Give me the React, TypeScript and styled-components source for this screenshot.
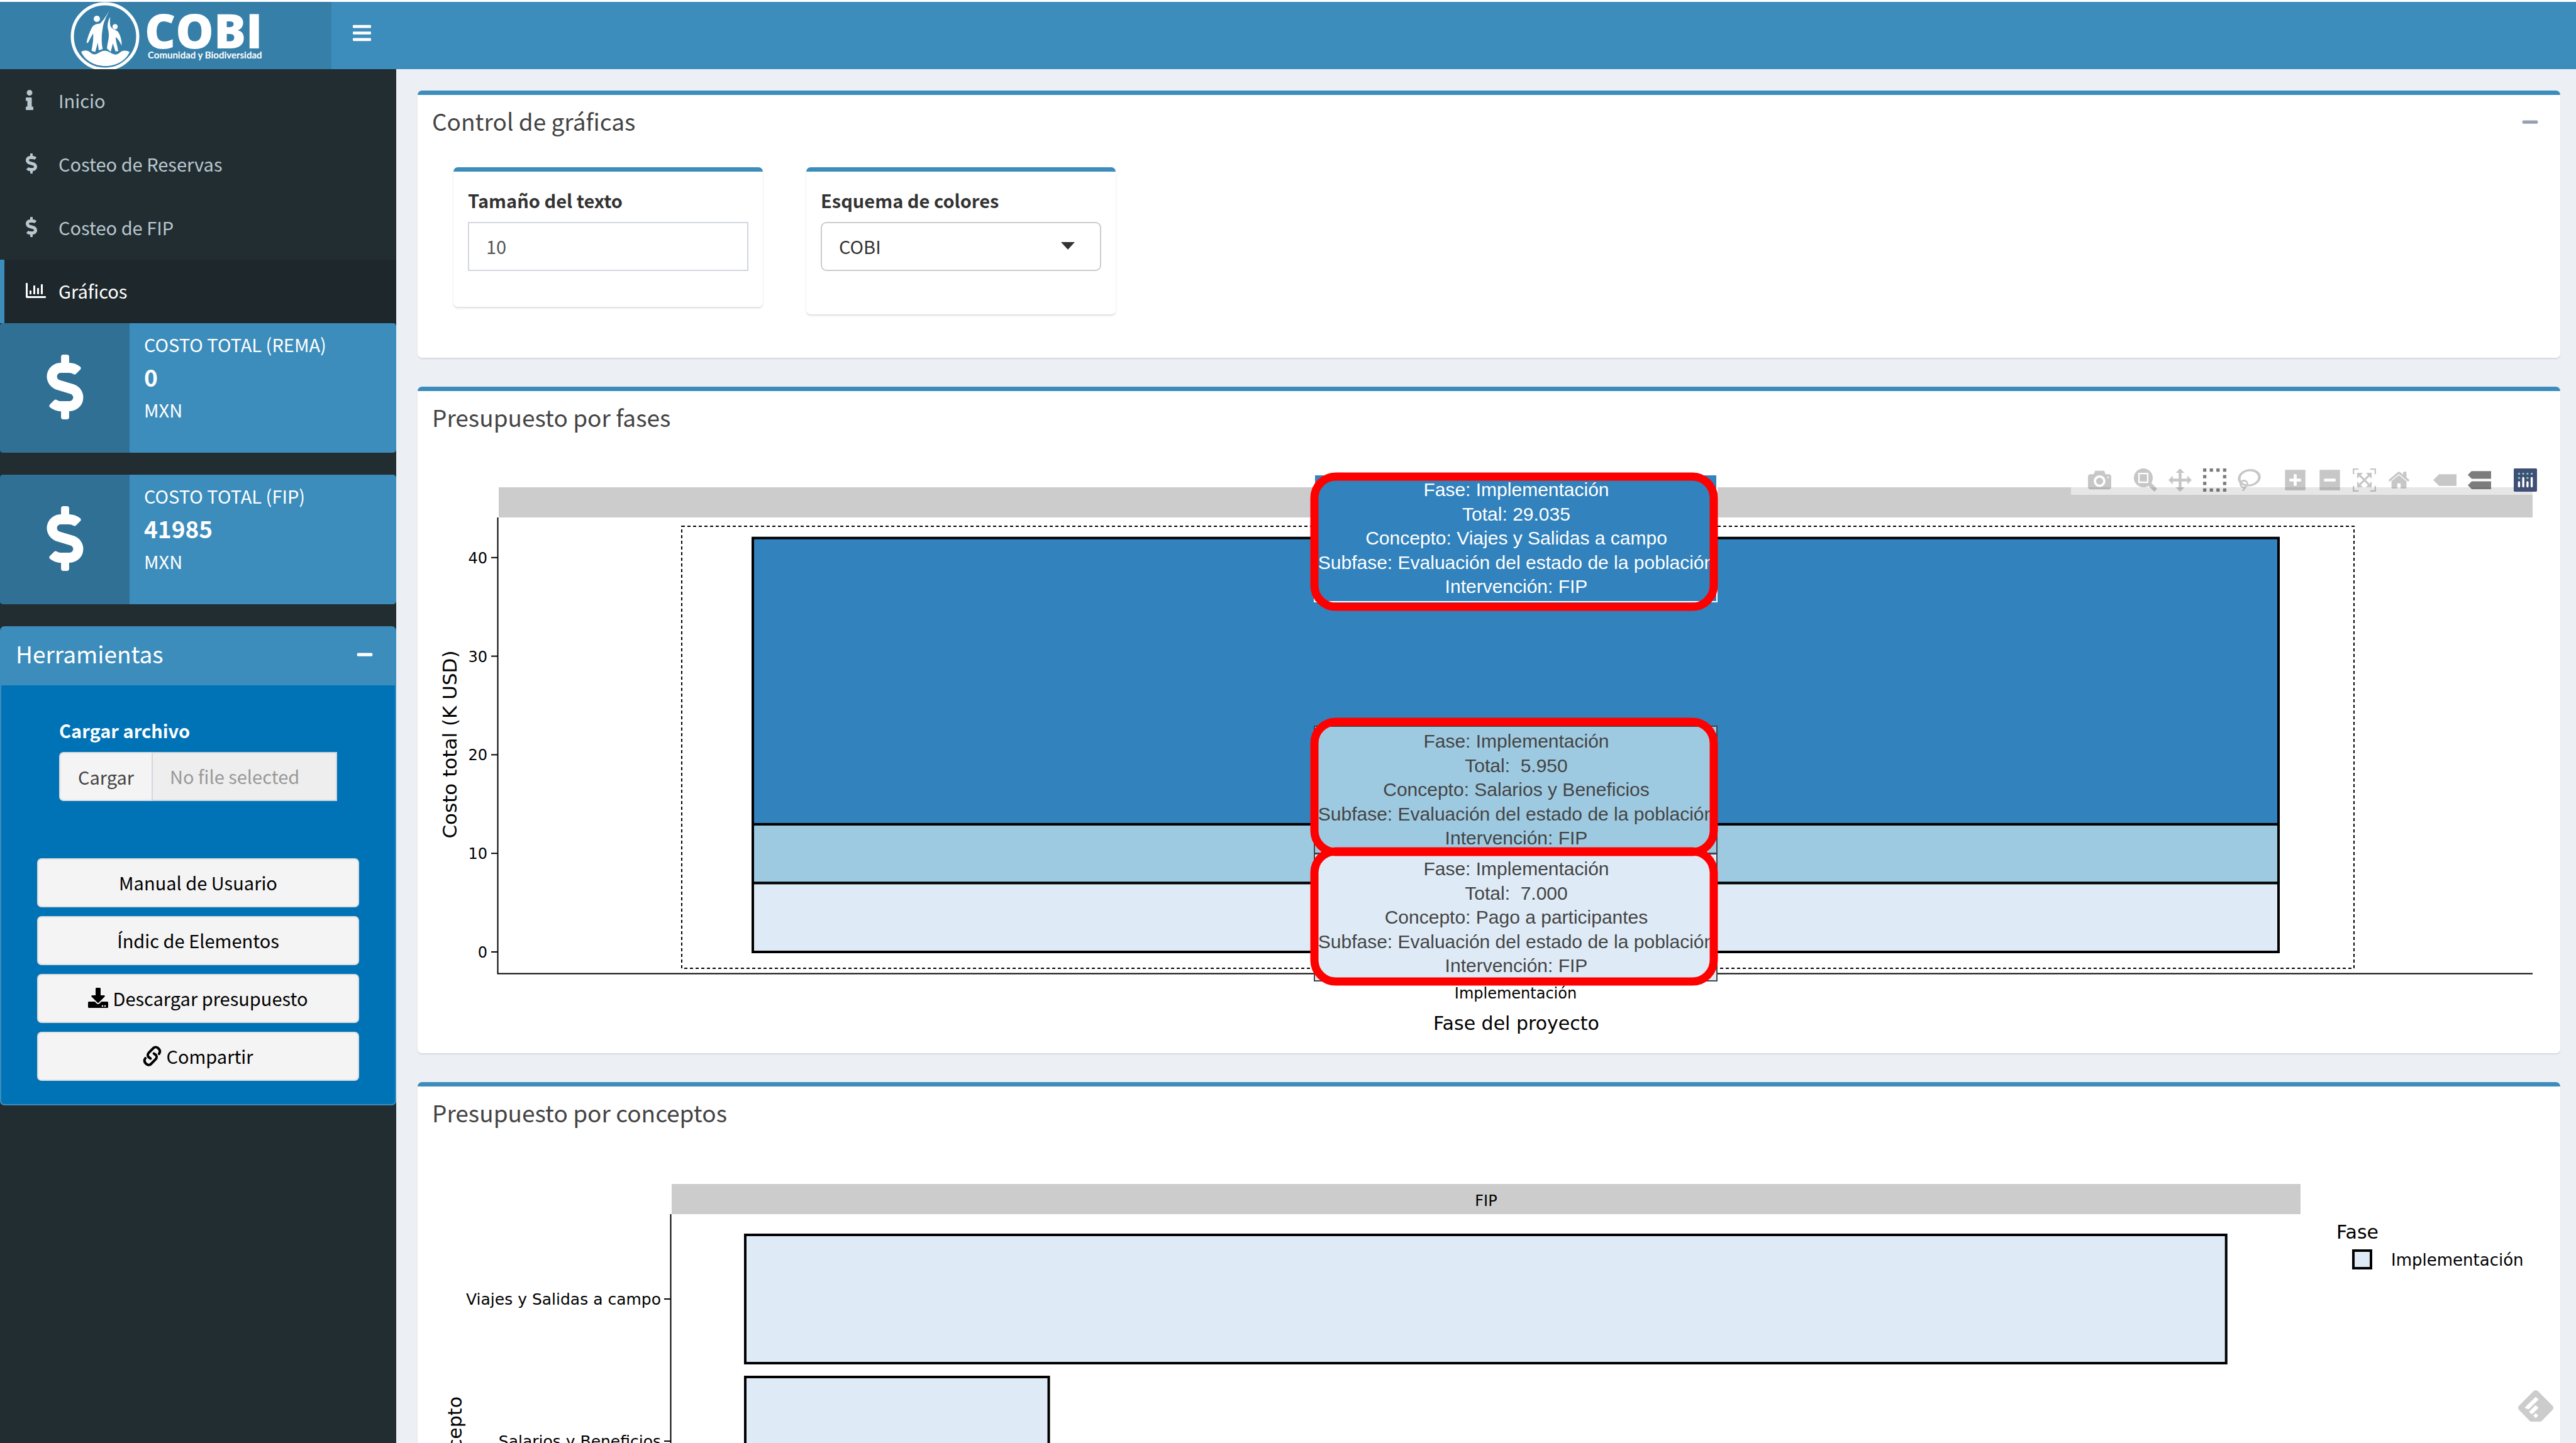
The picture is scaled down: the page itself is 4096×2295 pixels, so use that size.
import React from 'react';
import styled, { createGlobalStyle, css } from 'styled-components';
import {
  FaBars,
  FaDollarSign,
  FaDownload,
  FaInfo,
  FaMinus,
  FaRegChartBar,
} from 'react-icons/fa';

const color = {
  primary: '#3c8dbc',
  primaryDark: '#367fa9',
  iconPanel: '#307095',
  tools: '#0073b7',
  sidebar: '#222d32',
  sidebarActive: '#1e282c',
  sidebarText: '#b8c7ce',
  page: '#ecf0f5',
};

const sans = `'Noto Sans CJK SC', 'Open Sans', sans-serif`;

const GlobalStyle = createGlobalStyle`
  *, *::before, *::after { box-sizing: border-box; }
  body {
    margin: 0;
    background: ${color.page};
    color: #333;
    font-family: ${sans};
    font-size: 29px;
    line-height: 46px;
  }
  button, input, select { font: inherit; }
`;

/* ---------- shell ---------- */

const Shell = styled.div`
  display: flex;
  flex-direction: column;
  height: 100vh;
  overflow: hidden;
`;

const TopBar = styled.header`
  display: flex;
  flex: none;
  height: 110px;
  border-top: 3px solid #fff;
  background: ${color.primary};
`;

const Brand = styled.a`
  display: flex;
  align-items: flex-start;
  width: 527px;
  padding-left: 112px;
  gap: 8px;
  background: ${color.primaryDark};
  color: #fff;
  text-decoration: none;
`;

const Emblem = styled.svg`
  flex: none;
  width: 110px;
  height: 107px;
`;

const BrandWords = styled.span`
  display: flex;
  flex-direction: column;
  padding-top: 13px;
`;

const BrandName = styled.span`
  font-family: 'Open Sans', sans-serif;
  font-size: 76px;
  font-weight: 800;
  line-height: 63px;
`;

const BrandTag = styled.span`
  padding-left: 5px;
  font-family: Lato, sans-serif;
  font-size: 15px;
  font-weight: 700;
  line-height: 16px;
`;

const MenuToggle = styled.button`
  display: flex;
  align-items: center;
  padding: 0 32px 8px;
  border: 0;
  background: transparent;
  color: #fff;
  font-size: 33px;
`;

const Columns = styled.div`
  display: flex;
  flex: 1;
  min-height: 0;
`;

const Sidebar = styled.aside`
  flex: none;
  width: 630px;
  background: ${color.sidebar};
`;

const Content = styled.main`
  display: flex;
  flex: 1;
  flex-direction: column;
  gap: 46px;
  min-width: 0;
  padding: 34px 25px 34px 34px;
  overflow: hidden;
`;

/* ---------- sidebar ---------- */

const Menu = styled.nav`
  display: flex;
  flex-direction: column;
`;

const MenuLink = styled.a<{ $active?: boolean }>`
  display: flex;
  align-items: center;
  gap: 6px;
  padding: 26px 34px 29px;
  border-left: 7px solid ${(p) => (p.$active ? color.primary : 'transparent')};
  background: ${(p) => (p.$active ? color.sidebarActive : 'transparent')};
  color: ${(p) => (p.$active ? '#fff' : color.sidebarText)};
  text-decoration: none;
`;

const MenuIcon = styled.span`
  display: flex;
  width: 46px;
  font-size: 32px;
`;

const InfoBox = styled.section`
  display: flex;
  height: 206px;
  margin-bottom: 35px;
  border-radius: 5px;
  overflow: hidden;
  background: ${color.primary};
  color: #fff;
`;

const InfoIcon = styled.span`
  display: flex;
  align-items: center;
  justify-content: center;
  width: 206px;
  padding-bottom: 4px;
  background: ${color.iconPanel};
  font-size: 103px;
`;

const InfoText = styled.div`
  display: flex;
  flex-direction: column;
  padding: 10px 23px;
`;

const InfoNumber = styled.strong`
  font-size: 37px;
  font-weight: 700;
  line-height: 58px;
`;

const ToolsBox = styled.section`
  border: 2px solid ${color.primary};
  border-radius: 7px;
  overflow: hidden;
  background: ${color.tools};
  color: #fff;
`;

const ToolsBody = styled.div`
  display: flex;
  flex-direction: column;
  padding: 48px 57px 37px;
`;

const FileField = styled.div`
  display: flex;
  flex-direction: column;
  gap: 12px;
  padding: 0 35px;
  margin-bottom: 91px;
`;

const FieldLabel = styled.label`
  font-weight: 700;
`;

const FileGroup = styled.div`
  display: flex;
  height: 78px;
`;

const FileButton = styled.button`
  flex: none;
  width: 147px;
  padding: 0;
  border: 2px solid #ddd;
  border-right: 0;
  border-radius: 7px 0 0 7px;
  background: #f4f4f4;
  color: #444;
`;

const inputBase = css`
  width: 100%;
  min-width: 0;
  height: 78px;
  padding: 0 27px 2px;
  border: 2px solid #d2d6de;
  border-radius: 0;
  outline: 0;
  background: #fff;
  color: #555;
`;

const FileName = styled.input`
  ${inputBase}
  background: #eee;
  &::placeholder { color: #999; opacity: 1; }
`;

const ToolButtons = styled.div`
  display: flex;
  flex-direction: column;
  gap: 14px;
`;

const ToolButton = styled.button`
  display: flex;
  align-items: center;
  justify-content: center;
  gap: 7px;
  height: 78px;
  padding: 0 0 2px;
  border: 2px solid #ddd;
  border-radius: 7px;
  background: #f4f4f4;
  color: #000;
  svg { font-size: 32px; }
`;

/* ---------- boxes ---------- */

const BoxHeader = styled.div<{ $solid?: boolean }>`
  display: flex;
  align-items: flex-start;
  justify-content: space-between;
  height: 92px;
  padding: 18px 23px 0;
  background: ${(p) => (p.$solid ? color.primary : 'transparent')};
`;

const BoxTitle = styled.h3`
  margin: 0;
  font-size: 37px;
  font-weight: 400;
  line-height: 46px;
`;

const CollapseButton = styled.button<{ $light?: boolean }>`
  display: flex;
  padding: 11px;
  border: 0;
  background: transparent;
  color: ${(p) => (p.$light ? '#fff' : '#97a0b3')};
  font-size: 28px;
`;

const Box = styled.section`
  flex: none;
  border-top: 7px solid ${color.primary};
  border-radius: 7px;
  background: #fff;
  box-shadow: 0 2px 2px rgba(0, 0, 0, 0.1);
  color: #444;
`;

const BoxBody = styled.div`
  position: relative;
  padding: 23px;
`;

const Controls = styled.div`
  display: flex;
  align-items: flex-start;
  gap: 69px;
  padding: 0 34px 46px;
`;

const ControlCard = styled.div<{ $extra?: boolean }>`
  display: flex;
  flex-direction: column;
  gap: 12px;
  width: 492px;
  padding: 22px 23px ${(p) => (p.$extra ? 69 : 57)}px;
  border-top: 7px solid ${color.primary};
  border-radius: 7px;
  box-shadow: 0 2px 3px rgba(0, 0, 0, 0.14);
  color: #333;
`;

const TextInput = styled.input`
  ${inputBase}
`;

const SelectWrap = styled.div`
  position: relative;
  &::after {
    content: '';
    position: absolute;
    top: 32px;
    right: 42px;
    border: 11px solid transparent;
    border-top: 12px solid #333;
    border-bottom: 0;
    pointer-events: none;
  }
`;

const Select = styled.select`
  ${inputBase}
  display: block;
  appearance: none;
  border-color: #ccc;
  border-radius: 9px;
  color: #333;
`;

/* ---------- charts ---------- */

const ChartSvg = styled.svg`
  display: block;
  width: 100%;
  height: auto;
  font-family: Verdana, 'DejaVu Sans', sans-serif;
  font-size: 24px;
  fill: #000;
`;

const AxisTitle = styled.text<{ $size?: number }>`
  font-size: ${(p) => p.$size ?? 30}px;
`;

const CategoryText = styled.text`
  font-size: 25px;
`;

const LegendText = styled.text`
  font-size: 26px;
`;

const HoverText = styled.text`
  font-family: Arial, 'Liberation Sans', sans-serif;
  font-size: 30px;
  text-anchor: middle;
  white-space: pre;
`;

const ModeBar = styled.div`
  position: absolute;
  top: 28px;
  right: 28px;
  display: flex;
  height: 45px;
  background: rgba(255, 255, 255, 0.5);
`;

const ModeGroup = styled.div`
  display: flex;
  padding-left: 18px;
`;

const ModeButton = styled.button<{ $active?: boolean }>`
  display: flex;
  align-items: center;
  justify-content: center;
  width: 55px;
  padding: 0 0 2px;
  border: 0;
  background: transparent;
  color: ${(p) => (p.$active ? 'rgba(68,68,68,0.7)' : 'rgba(68,68,68,0.3)')};
  svg {
    width: 37px;
    height: 37px;
    fill: currentColor;
  }
`;

const FeedlyButton = styled.button`
  position: fixed;
  right: 36px;
  bottom: 34px;
  display: flex;
  padding: 0;
  border: 0;
  background: transparent;
`;

/* ---------- icons ---------- */

const ChainIcon = () => (
  <svg width="30" height="33" viewBox="0 0 29 33" fill="none" stroke="currentColor" strokeWidth="4" strokeLinecap="round" aria-hidden="true">
    <path d="M25.400 13C27.500 10 27.300 7.500 25 5.200L23.800 4C21.500 1.800 18.500 1.900 16.300 4L9 11.300C6.800 13.600 7 16.500 9 18.500L11.800 20.500" />
    <path d="M3.600 20C1.600 23 1.700 25.700 4 28L5.300 29.300C7.600 31.400 10.600 31.300 12.800 29L20 21.700C22.200 19.400 22 16.500 20 14.500L17.200 12.500" />
  </svg>
);

const CobiEmblem = () => (
  <Emblem viewBox="0 0 110 107" fill="#fff" aria-hidden="true">
    <circle cx="55" cy="55" r="52" fill="none" stroke="#fff" strokeWidth="5" />
    <circle cx="42" cy="27" r="5" />
    <path d="M62.400 13C58 20 53 29 47 34.500C40 35 36 37 33.500 42C30 49 27 57 25.600 65C27 66.500 29 64 30 61L36 50C37 59 35 69 33.500 78L39.500 79.500L43.500 65L45 77L51.300 75C49 64 49.500 52 51 44C52 33 57 23 62.400 13Z" />
    <circle cx="71" cy="39.500" r="4.200" />
    <path d="M63.300 24C60 29 58.500 36 59.500 42C61.500 49 61.500 56 60 62C59 66 58.500 70 58 74L64 79.500L67.500 66L71.500 78.500L76 78.500C75 71 72 63 72 56C75 58 78 62 81.200 69.500C82.500 64 79 50 74.500 46.500C70 44 65.500 43 63.500 38C62.500 34 62.800 29 63.300 24Z" />
    <path d="M17 79.500C22 76.500 27 76.500 31 80C36 84.500 40 84.500 45 81C51 76.500 58 76.500 64 81C70 84.500 74 84.500 78 81C83 76.500 88 76.500 94 79.500C88 94 72 102 55.500 102C38 102 23 93 17 79.500Z" />
  </Emblem>
);

const PlotlyLogo = () => (
  <svg viewBox="0 0 132 132" aria-hidden="true">
    <rect width="132" height="132" rx="6" fill="#3f4f75" />
    {[[30, 30], [54, 30], [78, 30], [102, 30], [30, 54], [78, 54]].map(([cx, cy]) => (
      <circle key={`${cx}-${cy}`} cx={cx} cy={cy} r="6" fill="#80cfbe" />
    ))}
    {[[24, 72], [48, 48], [72, 72], [96, 48]].map(([x, y]) => (
      <rect key={x} x={x} y={y} width="12" height={108 - y} rx="6" fill="#fff" />
    ))}
  </svg>
);

/* ---------- data ---------- */

const menu = [
  { label: 'Inicio', icon: <FaInfo preserveAspectRatio="xMinYMid meet" /> },
  { label: 'Costeo de Reservas', icon: <FaDollarSign preserveAspectRatio="xMinYMid meet" /> },
  { label: 'Costeo de FIP', icon: <FaDollarSign preserveAspectRatio="xMinYMid meet" /> },
  { label: 'Gráficos', icon: <FaRegChartBar />, active: true },
];

const totals = [
  { label: 'COSTO TOTAL (REMA)', value: '0' },
  { label: 'COSTO TOTAL (FIP)', value: '41985' },
];

const tools = [
  { label: 'Manual de Usuario' },
  { label: 'Índic de Elementos' },
  { label: 'Descargar presupuesto', icon: <FaDownload /> },
  { label: 'Compartir', icon: <ChainIcon /> },
];

const stack = [
  { concept: 'Pago a participantes', total: ' 7.000', value: 7, fill: '#deebf7', ink: '#444', top: 621, frame: 617 },
  { concept: 'Salarios y Beneficios', total: ' 5.950', value: 5.95, fill: '#9ecae1', ink: '#444', top: 418, frame: 411 },
  { concept: 'Viajes y Salidas a campo', total: '29.035', value: 29.035, fill: '#3182bd', ink: '#fff', top: 18, frame: 21 },
];

type Icon = { name: string; w: number; d: string; active?: boolean };

const modeIcons: Icon[][] = [
  [
    { name: 'Download plot', w: 1000, d: 'm500 450c-83 0-150-67-150-150 0-83 67-150 150-150 83 0 150 67 150 150 0 83-67 150-150 150z m400 150h-120c-16 0-34 13-39 29l-31 93c-6 15-23 28-40 28h-340c-16 0-34-13-39-28l-31-94c-6-15-23-28-40-28h-120c-55 0-100-45-100-100v-450c0-55 45-100 100-100h800c55 0 100 45 100 100v450c0 55-45 100-100 100z m-400-550c-138 0-250 112-250 250 0 138 112 250 250 250 138 0 250-112 250-250 0-138-112-250-250-250z m365 380c-19 0-35 16-35 35 0 19 16 35 35 35 19 0 35-16 35-35 0-19-16-35-35-35z' },
  ],
  [
    { name: 'Zoom', w: 1000, d: 'm1000-25l-250 251c40 63 63 138 63 218 0 224-182 406-407 406-224 0-406-182-406-406s183-406 407-406c80 0 155 22 218 62l250-250 125 125z m-812 250l0 438 437 0 0-438-437 0z m62 375l313 0 0-312-313 0 0 312z' },
    { name: 'Pan', w: 1000, d: 'm1000 350l-187 188 0-125-250 0 0 250 125 0-188 187-187-187 125 0 0-250-250 0 0 125-188-188 186-187 0 125 252 0 0-250-125 0 187-188 188 188-125 0 0 250 250 0 0-126 187 188z' },
    { name: 'Box select', w: 1000, active: true, d: 'm0 850l0-143 143 0 0 143-143 0z m286 0l0-143 143 0 0 143-143 0z m285 0l0-143 143 0 0 143-143 0z m286 0l0-143 143 0 0 143-143 0z m-857-286l0-143 143 0 0 143-143 0z m857 0l0-143 143 0 0 143-143 0z m-857-285l0-143 143 0 0 143-143 0z m857 0l0-143 143 0 0 143-143 0z m-857-286l0-143 143 0 0 143-143 0z m286 0l0-143 143 0 0 143-143 0z m285 0l0-143 143 0 0 143-143 0z m286 0l0-143 143 0 0 143-143 0z' },
    { name: 'Lasso select', w: 1031, d: 'm1018 538c-36 207-290 336-568 286-277-48-473-256-436-463 10-57 36-108 76-151-13-66 11-137 68-183 34-28 75-41 114-42l-55-70 0 0c-2-1-3-2-4-3-10-14-8-34 5-45 14-11 34-8 45 4 1 1 2 3 2 5l0 0 113 140c16 11 31 24 45 40 4 3 6 7 8 11 48-3 100 0 151 9 278 48 473 255 436 462z m-624-379c-80 14-149 48-197 96 42 42 109 47 156 9 33-26 47-66 41-105z m-187-74c-19 16-33 37-39 60 50-32 109-55 174-68-42-25-95-24-135 8z m360 75c-34-7-69-9-102-8 8 62-16 128-68 170-73 59-175 54-244-5-9 20-16 40-20 61-28 159 121 317 333 354s407-60 434-217c28-159-121-318-333-355z' },
  ],
  [
    { name: 'Zoom in', w: 875, d: 'm1 787l0-875 875 0 0 875-875 0z m687-500l-187 0 0-187-125 0 0 187-188 0 0 125 188 0 0 187 125 0 0-187 187 0 0-125z' },
    { name: 'Zoom out', w: 875, d: 'm0 788l0-876 876 0 0 876-876 0z m688-500l-500 0 0 125 500 0 0-125z' },
    { name: 'Autoscale', w: 1000, d: 'm250 850l-187 0-63 0 0-62 0-188 63 0 0 188 187 0 0 62z m688 0l-188 0 0-62 188 0 0-188 62 0 0 188 0 62-62 0z m-875-938l0 188-63 0 0-188 0-62 63 0 187 0 0 62-187 0z m875 188l0-188-188 0 0-62 188 0 62 0 0 62 0 188-62 0z m-125 188l-1 0-93-94-156 156 156 156 92-93 2 0 0 250-250 0 0-2 93-92-156-156-156 156 94 92 0 2-250 0 0-250 0 0 93 93 157-156-157-156-93 94 0 0 0-250 250 0 0 0-94 93 156 157 156-157-93-93 0 0 250 0 0 250z' },
    { name: 'Reset axes', w: 929, d: 'm786 296v-267q0-15-11-26t-25-10h-214v214h-143v-214h-214q-15 0-25 10t-11 26v267q0 1 0 2t0 2l321 264 321-264q1-1 1-4z m124 39l-34-41q-5-5-12-6h-2q-7 0-12 3l-386 322-386-322q-7-4-13-4-7 2-12 7l-35 41q-4 5-3 13t6 12l401 334q18 15 42 15t43-15l136-114v109q0 8 5 13t13 5h107q8 0 13-5t5-13v-227l122-102q5-5 6-12t-4-13z' },
  ],
  [
    { name: 'Show closest data', w: 1500, d: 'm375 725l0 0-375-375 375-374 0-1 1125 0 0 750-1125 0z' },
    { name: 'Compare data', w: 1125, active: true, d: 'm187 786l0 2-187-188 188-187 0 0 937 0 0 373-938 0z m0-499l0 1-187-188 188-188 0 0 937 0 0 376-938-1z' },
  ],
];

/* ---------- pieces ---------- */

const ChartModeBar = () => (
  <ModeBar>
    {modeIcons.map((group) => (
      <ModeGroup key={group[0].name}>
        {group.map((icon) => (
          <ModeButton key={icon.name} type="button" aria-label={icon.name} $active={icon.active}>
            <svg viewBox={`0 0 ${icon.w} 1000`} aria-hidden="true">
              <path transform="matrix(1 0 0 -1 0 850)" d={icon.d} />
            </svg>
          </ModeButton>
        ))}
      </ModeGroup>
    ))}
    <ModeGroup>
      <ModeButton type="button" aria-label="Plotly">
        <PlotlyLogo />
      </ModeButton>
    </ModeGroup>
  </ModeBar>
);

const PhaseChart = () => {
  const zero = 777;
  const unit = 15.68;
  let sum = 0;
  const bars = stack.map((s) => {
    const bottom = zero - sum * unit;
    sum += s.value;
    const top = zero - sum * unit;
    return { ...s, y: top, h: bottom - top };
  });
  return (
    <ChartSvg viewBox="0 0 3361 915" role="img" aria-label="Presupuesto por fases">
      <rect x="106" y="38" width="3234" height="48" fill="#ccc" />
      <path d="M104.500 86V811.500H3340" fill="none" stroke="#000" strokeWidth="2" />
      {[0, 10, 20, 30, 40].map((t) => (
        <g key={t}>
          <path d={`M94 ${zero - t * unit}H104`} stroke="#000" strokeWidth="2" />
          <text x="88" y={zero - t * unit + 9} textAnchor="end">{t}</text>
        </g>
      ))}
      <AxisTitle $size={31} transform="translate(39 447) rotate(-90)" textAnchor="middle">Costo total (K USD)</AxisTitle>
      {bars.map((b) => (
        <rect key={b.concept} x="510" y={b.y} width="2426" height={b.h} fill={b.fill} stroke="#000" strokeWidth="4" />
      ))}
      <rect x="397" y="100" width="2659" height="703" fill="none" stroke="#000" strokeWidth="2" strokeDasharray="5 4" />
      <text x="1723" y="851" textAnchor="middle">Implementación</text>
      <AxisTitle x="1724" y="901" textAnchor="middle">Fase del proyecto</AxisTitle>
      {[...stack].reverse().map((s) => (
        <g key={s.concept}>
          <rect x="1403" y={s.top} width="640" height="202" fill={s.fill} stroke={s.ink} strokeWidth="2" />
          <HoverText fill={s.ink}>
            {[
              'Fase: Implementación',
              `Total: ${s.total}`,
              `Concepto: ${s.concept}`,
              'Subfase: Evaluación del estado de la población',
              'Intervención: FIP',
            ].map((line, i) => (
              <tspan key={line} x="1724" y={s.top + 34 + i * 38.5}>{line}</tspan>
            ))}
          </HoverText>
        </g>
      ))}
      {stack.map((s) => (
        <rect key={s.concept} x="1403" y={s.frame} width="635" height="207" rx="34" fill="none" stroke="#f00" strokeWidth="13" />
      ))}
    </ChartSvg>
  );
};

const ConceptChart = () => (
  <ChartSvg viewBox="0 0 3361 560" role="img" aria-label="Presupuesto por conceptos">
    <rect x="381" y="40" width="2590" height="48" fill="#ccc" />
    <text x="1676" y="75" textAnchor="middle">FIP</text>
    <path d="M379.500 88V560" stroke="#000" strokeWidth="2" />
    {[stack[2], stack[1]].map((s, i) => (
      <g key={s.concept} transform={`translate(0 ${i * 226})`}>
        <path d="M369 223H379" stroke="#000" strokeWidth="2" />
        <CategoryText x="364" y="232" textAnchor="end">{s.concept}</CategoryText>
        <rect x="498" y="121" width={s.value * 81.1} height="204" fill="#deebf7" stroke="#000" strokeWidth="4" />
      </g>
    ))}
    <AxisTitle transform="translate(47 378) rotate(-90)" textAnchor="end">Concepto</AxisTitle>
    <AxisTitle x="3028" y="127">Fase</AxisTitle>
    <rect x="3055" y="146" width="28" height="28" fill="#deebf7" stroke="#000" strokeWidth="4" />
    <LegendText x="3115" y="170">Implementación</LegendText>
  </ChartSvg>
);

export default function App() {
  return (
    <Shell>
      <GlobalStyle />
      <TopBar>
        <Brand href="#" aria-label="COBI Comunidad y Biodiversidad">
          <CobiEmblem />
          <BrandWords>
            <BrandName>COBI</BrandName>
            <BrandTag>Comunidad y Biodiversidad</BrandTag>
          </BrandWords>
        </Brand>
        <MenuToggle type="button" aria-label="Toggle navigation">
          <FaBars />
        </MenuToggle>
      </TopBar>
      <Columns>
        <Sidebar>
          <Menu>
            {menu.map((m) => (
              <MenuLink key={m.label} href="#" $active={m.active}>
                <MenuIcon>{m.icon}</MenuIcon>
                {m.label}
              </MenuLink>
            ))}
          </Menu>
          {totals.map((t) => (
            <InfoBox key={t.label}>
              <InfoIcon><FaDollarSign /></InfoIcon>
              <InfoText>
                <span>{t.label}</span>
                <InfoNumber>{t.value}</InfoNumber>
                <span>MXN</span>
              </InfoText>
            </InfoBox>
          ))}
          <ToolsBox>
            <BoxHeader $solid>
              <BoxTitle>Herramientas</BoxTitle>
              <CollapseButton type="button" aria-label="Collapse" $light><FaMinus /></CollapseButton>
            </BoxHeader>
            <ToolsBody>
              <FileField>
                <FieldLabel htmlFor="file-name">Cargar archivo</FieldLabel>
                <FileGroup>
                  <FileButton type="button">Cargar</FileButton>
                  <FileName id="file-name" type="text" placeholder="No file selected" readOnly />
                </FileGroup>
              </FileField>
              <ToolButtons>
                {tools.map((t) => (
                  <ToolButton key={t.label} type="button">
                    {t.icon}
                    {t.label}
                  </ToolButton>
                ))}
              </ToolButtons>
            </ToolsBody>
          </ToolsBox>
        </Sidebar>
        <Content>
          <Box>
            <BoxHeader>
              <BoxTitle>Control de gráficas</BoxTitle>
              <CollapseButton type="button" aria-label="Collapse"><FaMinus /></CollapseButton>
            </BoxHeader>
            <BoxBody>
              <Controls>
                <ControlCard>
                  <FieldLabel htmlFor="text-size">Tamaño del texto</FieldLabel>
                  <TextInput id="text-size" type="text" inputMode="numeric" defaultValue="10" />
                </ControlCard>
                <ControlCard $extra>
                  <FieldLabel htmlFor="scheme">Esquema de colores</FieldLabel>
                  <SelectWrap>
                    <Select id="scheme" defaultValue="COBI">
                      <option>COBI</option>
                    </Select>
                  </SelectWrap>
                </ControlCard>
              </Controls>
            </BoxBody>
          </Box>
          <Box>
            <BoxHeader>
              <BoxTitle>Presupuesto por fases</BoxTitle>
            </BoxHeader>
            <BoxBody>
              <PhaseChart />
              <ChartModeBar />
            </BoxBody>
          </Box>
          <Box>
            <BoxHeader>
              <BoxTitle>Presupuesto por conceptos</BoxTitle>
            </BoxHeader>
            <BoxBody>
              <ConceptChart />
            </BoxBody>
          </Box>
        </Content>
      </Columns>
      <FeedlyButton type="button" aria-label="Feedly">
        <svg width="56" height="50" viewBox="0 0 56 50" aria-hidden="true">
          <path d="M24.500 1.500Q28 -1.500 31.500 1.500L54.500 24.500Q57.500 28 54.500 31.500L38 48.500Q37 50 35 50H21Q19 50 18 48.500L1.500 31.500Q-1.500 28 1.500 24.500Z" fill="#ccc" />
          <path d="M28 10.500L32.500 15L16.500 30.500L11 28.500V27ZM28 23.700L32.500 28L23 37.400H20L17.500 34ZM28 36.500L32 40.500L28 44.500L24 40.500Z" fill="#fff" />
        </svg>
      </FeedlyButton>
    </Shell>
  );
}
